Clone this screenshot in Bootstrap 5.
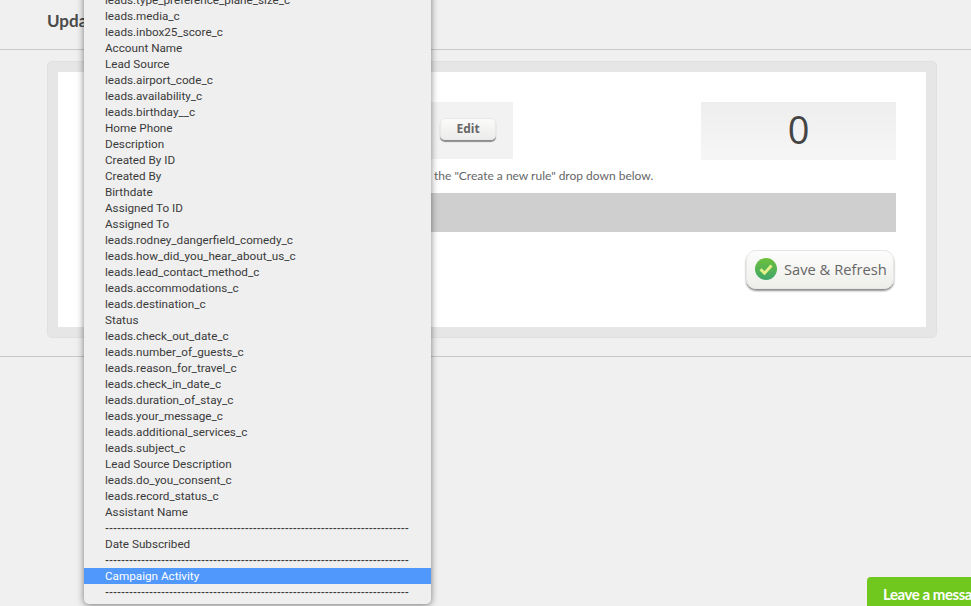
<!DOCTYPE html>
<html lang="en">
<head>
<meta charset="utf-8">
<title>Update</title>
<link href="https://cdn.jsdelivr.net/npm/bootstrap@5.3.0/dist/css/bootstrap.min.css" rel="stylesheet">
<style>
html,body{height:100%;}
body{background:#f0f0f0;overflow:hidden;position:relative;font-family:"Lato","Liberation Sans",sans-serif;color:#555;}
.page-head{height:50px;border-bottom:1px solid #c9c9c9;padding:10px 47px 0;}
.page-title{font-size:17px;font-weight:700;line-height:21px;color:#4a4a4a;margin:0;}
.outer-panel{margin:11px 34px 0 47px;height:277px;background:#e6e6e6;border:1px solid #e0e0e0;border-radius:5px;padding:10px;}
.inner-panel{background:#fff;height:255px;padding:30px 30px 0 43px;}
.rule-box{width:412px;height:57px;background:#f2f2f2;padding:0 17px 3px 0;}
.count-box{width:195px;height:58px;background:linear-gradient(#eeeeee,#f6f6f6);font-size:38px;line-height:55px;text-align:center;color:#444;font-family:"Open Sans","Liberation Sans",sans-serif;}
.edit-btn{width:56px;height:22px;padding:0;font-size:12px;font-weight:700;line-height:20px;color:#666;font-family:"Open Sans","Liberation Sans",sans-serif;background:linear-gradient(#fbfbfb,#ececea);border:1px solid #e8e8e8;border-radius:5px;box-shadow:0 2px 1px #8c8c8c;}
.hint-line{font-size:12px;line-height:16px;margin:8px 0 9px;padding-left:333px;color:#666;white-space:nowrap;}
.grey-bar{height:39px;background:#cfcfcf;}
.save-btn{width:148px;height:39px;margin-top:18px;margin-right:2px;padding:0 0 1px 8px;gap:7px;font-size:14.7px;line-height:1;color:#666;font-family:"Open Sans","Liberation Sans",sans-serif;background:linear-gradient(#fdfdfd,#eeeeea);border:1px solid #e6e6e6;border-radius:10px;box-shadow:0 2px 2px #8f8f8f;}
.foot-rule{margin-top:18px;border-top:1px solid #c9c9c9;}
.select-menu{position:absolute;left:84px;top:-8px;width:347px;height:612px;background:#efefef;border-radius:0 0 5px 5px;box-shadow:0 1px 7px rgba(0,0,0,.5);margin:0;padding:0;overflow:hidden;font-family:"Roboto","Liberation Sans",sans-serif;font-size:11.7px;line-height:16px;color:#3a3a3a;}
.select-menu li{height:16px;padding-left:21px;white-space:nowrap;}
.select-menu li.picked{background:#5098fb;color:#fff;}
.select-menu li.dash-row{font-family:"Liberation Sans",sans-serif;font-size:12px;}
.chat-tab{position:absolute;left:867px;top:577px;width:104px;height:29px;background:#70c71e;border-radius:4px 0 0 0;color:#fff;font-weight:700;font-size:15px;letter-spacing:-.45px;line-height:35px;padding-left:16px;white-space:nowrap;overflow:hidden;}
</style>
</head>
<body>
<header class="page-head"><h1 class="page-title">Update Rule</h1></header>
<section class="outer-panel">
  <div class="inner-panel">
    <div class="d-flex justify-content-between">
      <div class="rule-box d-flex align-items-center justify-content-end"><button type="button" class="btn edit-btn">Edit</button></div>
      <div class="count-box">0</div>
    </div>
    <p class="hint-line">the "Create a new rule" drop down below.</p>
    <div class="grey-bar"></div>
    <div class="d-flex justify-content-end">
      <button type="button" class="btn save-btn d-flex align-items-center">
        <svg width="22" height="22" viewBox="0 0 22 22" aria-hidden="true"><defs><linearGradient id="gr" x1="0" y1="0" x2="0" y2="1"><stop offset="0" stop-color="#6cc03a"/><stop offset="1" stop-color="#3fa66a"/></linearGradient></defs><circle cx="11" cy="11" r="11" fill="url(#gr)"/><path d="M5.5 11.2l4 4 7-7.6" fill="none" stroke="#e4ef8a" stroke-width="3"/></svg>
        <span>Save &amp; Refresh</span>
      </button>
    </div>
  </div>
</section>
<div class="foot-rule"></div>
<ul class="select-menu list-unstyled">
<li>leads.type_preference_plane_size_c</li>
<li>leads.media_c</li>
<li>leads.inbox25_score_c</li>
<li>Account Name</li>
<li>Lead Source</li>
<li>leads.airport_code_c</li>
<li>leads.availability_c</li>
<li>leads.birthday__c</li>
<li>Home Phone</li>
<li>Description</li>
<li>Created By ID</li>
<li>Created By</li>
<li>Birthdate</li>
<li>Assigned To ID</li>
<li>Assigned To</li>
<li>leads.rodney_dangerfield_comedy_c</li>
<li>leads.how_did_you_hear_about_us_c</li>
<li>leads.lead_contact_method_c</li>
<li>leads.accommodations_c</li>
<li>leads.destination_c</li>
<li>Status</li>
<li>leads.check_out_date_c</li>
<li>leads.number_of_guests_c</li>
<li>leads.reason_for_travel_c</li>
<li>leads.check_in_date_c</li>
<li>leads.duration_of_stay_c</li>
<li>leads.your_message_c</li>
<li>leads.additional_services_c</li>
<li>leads.subject_c</li>
<li>Lead Source Description</li>
<li>leads.do_you_consent_c</li>
<li>leads.record_status_c</li>
<li>Assistant Name</li>
<li class="dash-row">----------------------------------------------------------------------------</li>
<li>Date Subscribed</li>
<li class="dash-row">----------------------------------------------------------------------------</li>
<li class="picked">Campaign Activity</li>
<li class="dash-row">----------------------------------------------------------------------------</li>
</ul>
<div class="chat-tab">Leave a message</div>
<script src="https://cdn.jsdelivr.net/npm/bootstrap@5.3.0/dist/js/bootstrap.bundle.min.js"></script>
</body>
</html>
